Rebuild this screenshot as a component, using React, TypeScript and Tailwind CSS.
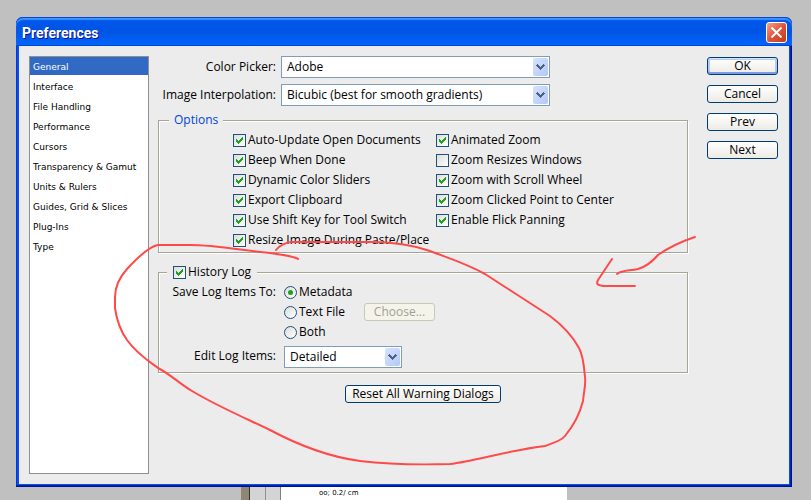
import type { ReactNode } from 'react'

const categories = [
  'General',
  'Interface',
  'File Handling',
  'Performance',
  'Cursors',
  'Transparency & Gamut',
  'Units & Rulers',
  'Guides, Grid & Slices',
  'Plug-Ins',
  'Type',
]

const leftOptions = [
  'Auto-Update Open Documents',
  'Beep When Done',
  'Dynamic Color Sliders',
  'Export Clipboard',
  'Use Shift Key for Tool Switch',
  'Resize Image During Paste/Place',
]

const rightOptions = [
  { label: 'Animated Zoom', checked: true },
  { label: 'Zoom Resizes Windows', checked: false },
  { label: 'Zoom with Scroll Wheel', checked: true },
  { label: 'Zoom Clicked Point to Center', checked: true },
  { label: 'Enable Flick Panning', checked: true },
]

function Checkbox({ label, checked = true }: { label: string; checked?: boolean }) {
  return (
    <label className="flex h-5 items-center gap-0.5 whitespace-nowrap">
      <span className="grid shrink-0 place-items-center">
        <input
          type="checkbox"
          defaultChecked={checked}
          className="peer col-start-1 row-start-1 size-[13px] appearance-none border border-[#1c5180] bg-linear-to-br from-[#dcdcd7] to-white"
        />
        <svg
          viewBox="0 0 7 7"
          shapeRendering="crispEdges"
          className="pointer-events-none invisible col-start-1 row-start-1 size-[7px] fill-[#21a121] peer-checked:visible"
        >
          <path d="M0 2h1v3h-1zM1 3h1v3h-1zM2 4h1v3h-1zM3 3h1v3h-1zM4 2h1v3h-1zM5 1h1v3h-1zM6 0h1v3h-1z" />
        </svg>
      </span>
      {label}
    </label>
  )
}

function Radio({ label, checked = false }: { label: string; checked?: boolean }) {
  return (
    <label className="flex h-5 items-center gap-0.5 whitespace-nowrap">
      <span className="grid shrink-0 place-items-center">
        <input
          type="radio"
          name="log-target"
          defaultChecked={checked}
          className="peer col-start-1 row-start-1 size-[13px] appearance-none rounded-full border border-[#1c5180] bg-linear-to-br from-[#dcdcd7] to-white"
        />
        <span className="pointer-events-none invisible col-start-1 row-start-1 size-[5px] rounded-full bg-[#21a121] peer-checked:visible" />
      </span>
      {label}
    </label>
  )
}

function Select({ id, value, className }: { id: string; value: string; className: string }) {
  return (
    <div className={`grid items-center ${className}`}>
      <select
        id={id}
        className="col-start-1 row-start-1 h-[22px] w-full appearance-none border border-[#7f9db9] bg-white pl-[5px]"
      >
        <option>{value}</option>
      </select>
      <span className="pointer-events-none col-start-1 row-start-1 mr-0.5 grid h-[18px] w-[15px] place-items-center justify-self-end rounded-[2px] bg-linear-to-br from-[#d6e2ff] to-[#b4c8f6]">
        <svg viewBox="0 0 9 6" shapeRendering="crispEdges" className="h-1.5 w-[9px] fill-[#4d6185]">
          <path d="M1 0h1v1h1v1h1v1h1v-1h1v-1h1v-1h1v1h1v1h-1v1h-1v1h-1v1h-1v1h-1v-1h-1v-1h-1v-1h-1v-1h-1v-1h1z" />
        </svg>
      </span>
    </div>
  )
}

function Button({ children, className = '' }: { children: ReactNode; className?: string }) {
  return (
    <button
      className={`h-[18px] rounded-[3px] border border-[#003c74] bg-linear-to-b from-white to-[#ecebe5] leading-4 whitespace-nowrap ${className}`}
    >
      {children}
    </button>
  )
}

const groupBox =
  'min-w-0 border border-[#a7a596] shadow-[1px_1px_0_#fff,inset_1px_1px_0_#fff]'

export default function App() {
  return (
    <div className="relative flex min-h-screen flex-col overflow-hidden bg-[#c0c0c0] pt-[17px] font-['Open_Sans',sans-serif] text-[12px] leading-4 text-black">
      <main className="mr-[19px] ml-4 flex flex-1 flex-col rounded-t-[7px] bg-[#0850ee] shadow-[inset_-1px_-1px_0_#00138c,inset_-2px_-2px_0_#0022a8,inset_1px_0_0_#0831d9]">
        <header className="flex h-[29px] items-center justify-between rounded-t-[7px] bg-linear-to-b from-[#0058ee] via-[#0054e3] to-[#0066ff] pr-[5px] pl-1.5 shadow-[inset_0_1px_0_#0a46d0,inset_0_3px_1px_#3a93ff,inset_0_-1px_0_#0046d5]">
          <h1 className="pt-0.5 font-['Roboto',sans-serif] text-[14px] font-bold text-white [text-shadow:1px_1px_0_#0f1089]">
            Preferences
          </h1>
          <button
            aria-label="Close"
            className="mt-0.5 grid size-[21px] place-items-center rounded-[3px] border border-white bg-linear-to-br from-[#f0a08a] via-[#e0553a] to-[#c43a10]"
          >
            <svg viewBox="0 0 11 11" className="size-[11px] stroke-white stroke-2">
              <path d="M0.5 0.5l10 10M10.5 0.5l-10 10" />
            </svg>
          </button>
        </header>

        <div className="mx-[3px] mb-[3px] flex flex-1 bg-[#ececec] py-2.5 pr-[11px] pl-2.5">
          <nav className="w-[120px] shrink-0 border border-[#8e8f8f] bg-white pr-[11px] font-['DejaVu_Sans',sans-serif] text-[9px]">
            <ul className="flex flex-col gap-0.5">
              {categories.map((name, i) => (
                <li key={name} className={i === 0 ? '-mr-[11px] bg-[#316ac5] text-white' : ''}>
                  <a href="#" className="block h-[18px] overflow-hidden pl-[3px] leading-[20px] whitespace-nowrap">
                    {name}
                  </a>
                </li>
              ))}
            </ul>
          </nav>

          <div className="ml-[9px] flex min-w-0 flex-1 flex-col">
            <div className="grid grid-cols-[118px_269px] items-center gap-x-[5px] gap-y-1.5 text-right">
              <label htmlFor="picker">Color Picker:</label>
              <Select id="picker" value="Adobe" className="w-full" />
              <label htmlFor="interpolation" className="justify-self-end whitespace-nowrap">
                Image Interpolation:
              </label>
              <Select id="interpolation" value="Bicubic (best for smooth gradients)" className="w-full" />
            </div>

            <fieldset className={`mt-1 ${groupBox}`}>
              <legend className="ml-2.5 h-5 bg-[#ececec] px-[5px] leading-5 text-[#0046d5]">Options</legend>
              <div className="grid grid-cols-[203px_auto] pb-0.5 pl-[74px]">
                <div>
                  {leftOptions.map((label) => (
                    <Checkbox key={label} label={label} />
                  ))}
                </div>
                <div>
                  {rightOptions.map((option) => (
                    <Checkbox key={option.label} {...option} />
                  ))}
                </div>
              </div>
            </fieldset>

            <fieldset className={`mt-[9px] ${groupBox}`}>
              <legend className="ml-2 bg-[#ececec] px-1.5">
                <Checkbox label="History Log" />
              </legend>
              <div className="grid grid-cols-[117px_auto] items-start gap-x-2 pb-1">
                <span className="text-right leading-5 whitespace-nowrap">Save Log Items To:</span>
                <div>
                  <Radio label="Metadata" checked />
                  <div className="flex items-center">
                    <div className="w-20">
                      <Radio label="Text File" />
                    </div>
                    <button
                      disabled
                      className="h-[18px] w-[71px] rounded-[3px] border border-[#c9c7ba] bg-[#f5f4ea] leading-4 text-[#a1a192]"
                    >
                      Choose...
                    </button>
                  </div>
                  <Radio label="Both" />
                </div>
                <label htmlFor="log-items" className="mt-1 text-right leading-5">
                  Edit Log Items:
                </label>
                <Select id="log-items" value="Detailed" className="mt-1 w-[118px]" />
              </div>
            </fieldset>

            <Button className="mt-3 w-[156px] self-center">Reset All Warning Dialogs</Button>
          </div>

          <div className="ml-[19px] flex w-[71px] shrink-0 flex-col gap-2.5 pt-px">
            <Button className="shadow-[inset_0_1px_0_#cee7ff,inset_0_-2px_0_#7c9be6,inset_0_0_0_2px_#b5cbf5]">OK</Button>
            <Button>Cancel</Button>
            <Button>Prev</Button>
            <Button>Next</Button>
          </div>
        </div>
      </main>

      {/* sliver of the document behind the dialog */}
      <footer className="flex h-[13px] overflow-hidden pl-[241px]">
        <div className="w-[9px] border-r border-[#333] bg-[#8f8675]" />
        <div className="w-4 border-r border-[#909090] bg-[#d4d4d4]" />
        <div className="w-[15px] border-r border-[#808080] bg-[#d4d4d4]" />
        <div className="w-[286px] bg-white pl-[38px] font-['DejaVu_Sans',sans-serif] text-[7px] leading-[13px]">
          oo; 0.2/ cm
        </div>
      </footer>

      {/* red pen marks */}
      <svg
        width="811"
        height="500"
        viewBox="0 0 811 500"
        className="pointer-events-none absolute top-0 left-0 fill-none stroke-[#ff4a4a] stroke-2"
        strokeLinecap="round"
        strokeLinejoin="round"
      >
        <path d="M298 259C296 257 290 256 270 253C240 250 215 245 190 245H158C150 246 140 255 127 269C118 279 115 289 115 297V308C117 322 122 333 127 340C137 354 150 362 158 368C170 374 180 384 192 391C215 405 245 418 270 430C300 446 330 457 360 461C385 464 415 465 450 464C475 461 510 450 545 446C553 443 561 441 565 436C574 425 580 413 583 401C584 390 586 385 585 377C584 365 583 355 579 348C572 335 562 325 550 316C530 303 505 287 485 274C465 263 445 257 430 251C410 244 390 242 370 242H291C285 243 279 246 276 250" />
        <path d="M695 237C680 242 665 250 658 255C652 262 645 267 638 269C628 271 622 270 617 274M612 259L598 280C596 284 597 285 603 286H635" />
      </svg>
    </div>
  )
}
